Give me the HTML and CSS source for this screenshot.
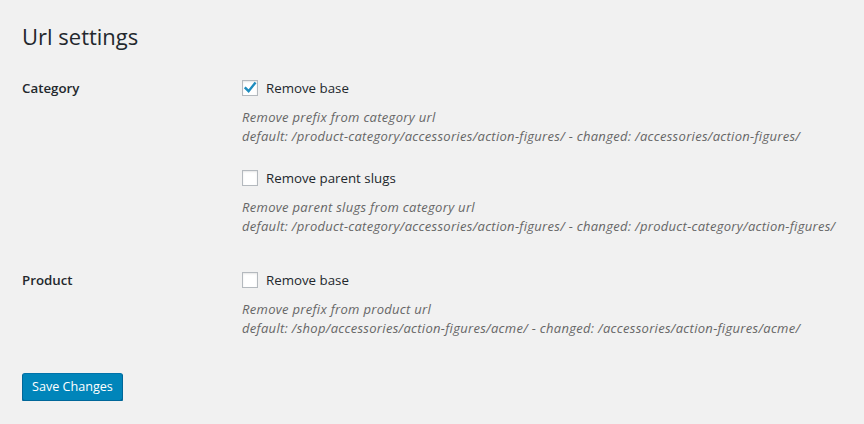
FILE: index.html
```html
<!DOCTYPE html>
<html>
<head>
<meta charset="utf-8">
<link rel="stylesheet" href="styles.css">
</head>
<body>
<div class="wrap">
  <h1 class="title">Url settings</h1>
  <form class="form">
    <div class="row">
      <div class="label">Category</div>
      <div class="field">
        <div class="option">
          <label class="check"><span class="box checked"><svg viewBox="0 0 16 16" width="16" height="16"><path d="M3.6 8.2 L6.6 11.2 L12.8 3.4" fill="none" stroke="#1e8cbe" stroke-width="2.4" stroke-linecap="square"/></svg></span>Remove base</label>
          <p class="desc">Remove prefix from category url<br>default: /product-category/accessories/action-figures/ - changed: /accessories/action-figures/</p>
        </div>
        <div class="option">
          <label class="check"><span class="box"></span>Remove parent slugs</label>
          <p class="desc">Remove parent slugs from category url<br>default: /product-category/accessories/action-figures/ - changed: /product-category/action-figures/</p>
        </div>
      </div>
    </div>
    <div class="row">
      <div class="label">Product</div>
      <div class="field">
        <div class="option">
          <label class="check"><span class="box"></span>Remove base</label>
          <p class="desc">Remove prefix from product url<br>default: /shop/accessories/action-figures/acme/ - changed: /accessories/action-figures/acme/</p>
        </div>
      </div>
    </div>
    <div class="actions">
      <button type="button" class="button">Save Changes</button>
    </div>
  </form>
</div>
</body>
</html>
```

FILE: styles.css
```css
html, body {
  margin: 0;
  padding: 0;
  background: #f1f1f1;
}
body {
  font-family: "Open Sans", "Liberation Sans", sans-serif;
  color: #23282d;
  font-size: 13px;
}
.wrap {
  padding: 22px 20px 0 22px;
}
.title {
  margin: 0;
  font-size: 22px;
  line-height: 29px;
  font-weight: 400;
  color: #23282d;
}
.form {
  margin-top: 27px;
}
.row {
  display: grid;
  grid-template-columns: 220px 1fr;
}
.row + .row {
  margin-top: 34px;
}
.label {
  font-size: 13.3px;
  font-weight: 600;
  line-height: 20px;
}
.option + .option {
  margin-top: 22px;
}
.check {
  display: flex;
  align-items: center;
  gap: 8px;
  font-size: 13.3px;
  line-height: 20px;
  height: 20px;
}
.box {
  width: 14px;
  height: 14px;
  border: 1px solid #b4b9be;
  background: #fff;
  box-shadow: inset 0 1px 2px rgba(0,0,0,0.1);
  position: relative;
  flex: none;
}
.box svg {
  position: absolute;
  left: -1px;
  top: -1px;
}
.desc {
  margin: 10px 0 0;
  font-size: 13px;
  line-height: 19px;
  font-style: italic;
  letter-spacing: 0.3px;
  color: #666;
}
.actions {
  margin-top: 35px;
}
.button {
  font-family: inherit;
  font-size: 12.6px;
  color: #fff;
  background: #0085ba;
  border: 1px solid #0073aa;
  border-color: #0073aa #006799 #006799;
  border-radius: 3px;
  box-shadow: 0 1px 0 #006799;
  height: 28px;
  padding: 0 9px 1px;
  line-height: 26px;
  white-space: nowrap;
}
```
